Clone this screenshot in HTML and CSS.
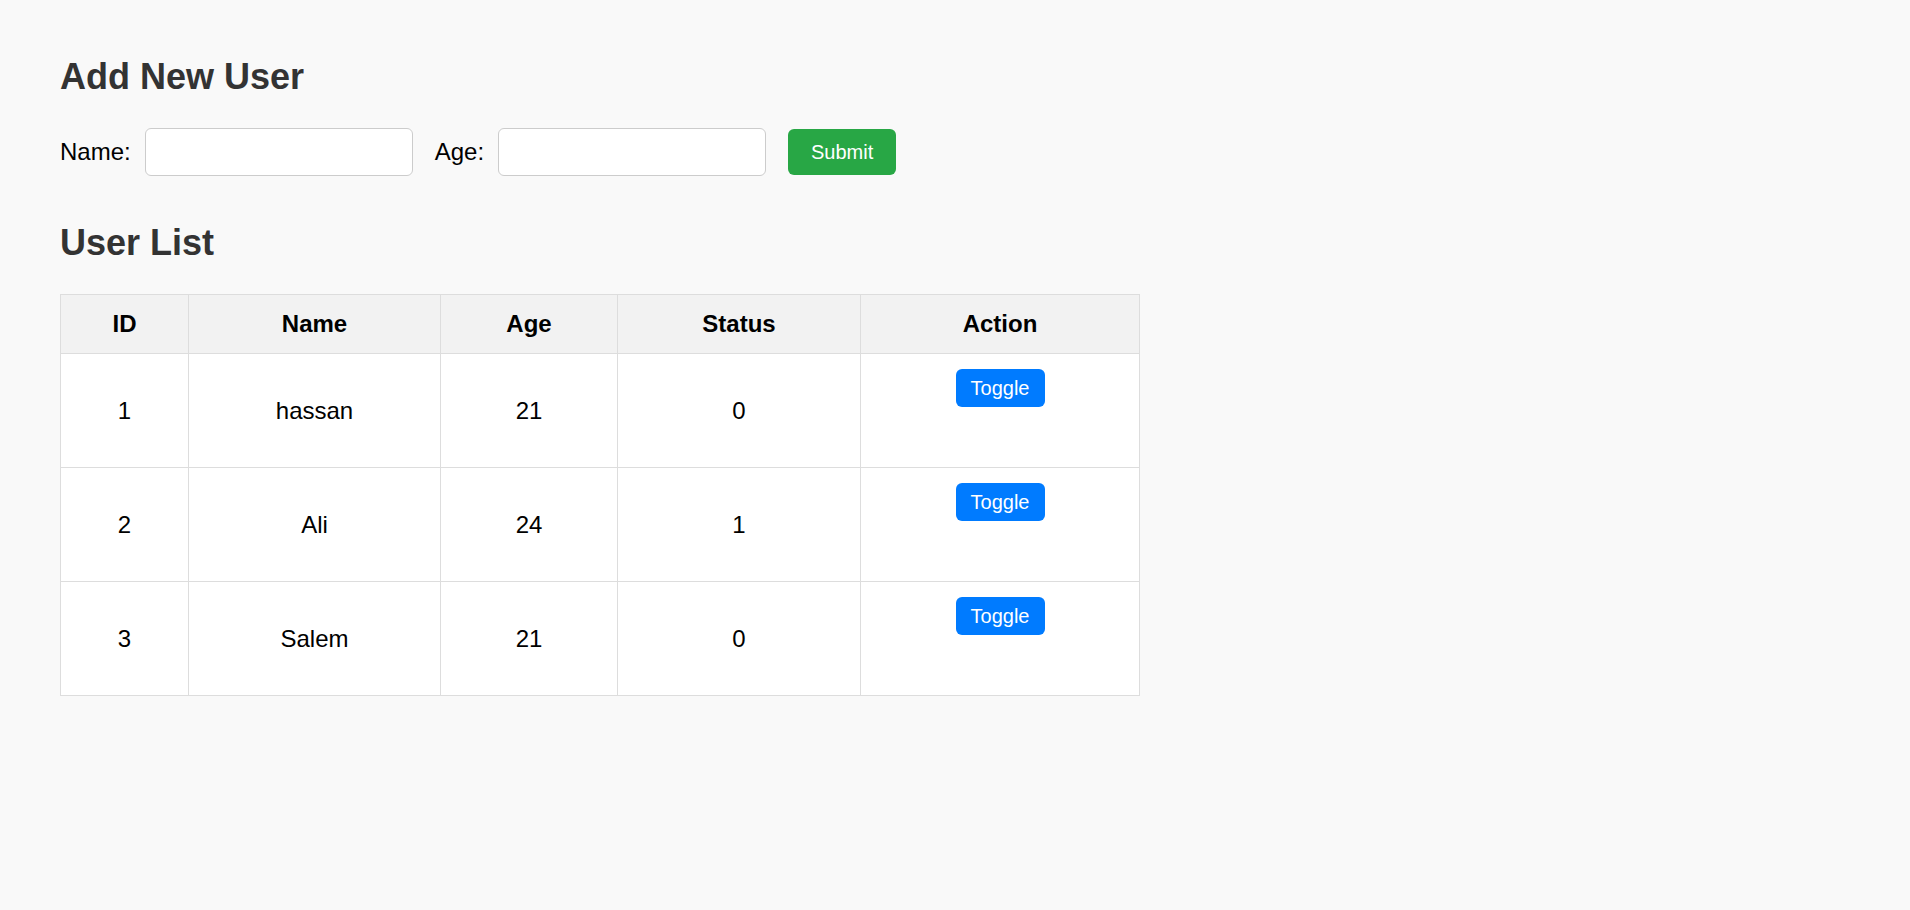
FILE: index.html
```html
<!DOCTYPE html>
<html lang="en">
<head>
<meta charset="utf-8">
<title>Users</title>
<link rel="stylesheet" href="styles.css">
</head>
<body>
  <h2 class="title">Add New User</h2>
  <form class="user-form">
    <label class="field-label" for="name">Name:</label>
    <input class="field-input" id="name" type="text">
    <label class="field-label" for="age">Age:</label>
    <input class="field-input" id="age" type="text">
    <button class="btn-submit" type="button">Submit</button>
  </form>

  <h2 class="title">User List</h2>
  <table class="user-table">
    <colgroup>
      <col class="c-id">
      <col class="c-name">
      <col class="c-age">
      <col class="c-status">
      <col class="c-action">
    </colgroup>
    <thead>
      <tr><th>ID</th><th>Name</th><th>Age</th><th>Status</th><th>Action</th></tr>
    </thead>
    <tbody>
      <tr>
        <td>1</td><td>hassan</td><td>21</td><td>0</td>
        <td class="action-cell"><div class="action-box"><button class="btn-toggle" type="button">Toggle</button></div></td>
      </tr>
      <tr>
        <td>2</td><td>Ali</td><td>24</td><td>1</td>
        <td class="action-cell"><div class="action-box"><button class="btn-toggle" type="button">Toggle</button></div></td>
      </tr>
      <tr>
        <td>3</td><td>Salem</td><td>21</td><td>0</td>
        <td class="action-cell"><div class="action-box"><button class="btn-toggle" type="button">Toggle</button></div></td>
      </tr>
    </tbody>
  </table>
</body>
</html>
```
FILE: styles.css
```css
html, body {
  margin: 0;
  background: #f9f9f9;
}
body {
  padding: 56px 60px;
  font-family: "Liberation Sans", Arial, sans-serif;
  font-size: 24px;
  color: #000;
}
.title {
  margin: 0 0 30px;
  font-size: 36px;
  line-height: 42px;
  font-weight: bold;
  color: #333;
}
.user-form {
  display: flex;
  align-items: center;
  height: 48px;
  margin: 0 0 46px;
}
.field-label {
  font-size: 24px;
  margin-right: 14px;
}
.field-input {
  box-sizing: border-box;
  width: 268px;
  height: 48px;
  margin: 0 22px 0 0;
  padding: 0 12px;
  border: 1px solid #ccc;
  border-radius: 6px;
  background: #fff;
  font: 24px "Liberation Sans", Arial, sans-serif;
}
.btn-submit {
  box-sizing: border-box;
  height: 46px;
  width: 108px;
  padding: 0;
  border: none;
  border-radius: 6px;
  background: #28a745;
  color: #fff;
  font: 20px "Liberation Sans", Arial, sans-serif;
}
.user-table {
  width: 1079px;
  table-layout: fixed;
  border-collapse: collapse;
  background: #fff;
}
.c-id { width: 128px; }
.c-name { width: 252px; }
.c-age { width: 177px; }
.c-status { width: 243px; }
.c-action { width: 279px; }
.user-table th,
.user-table td {
  border: 1px solid #ddd;
  padding: 15px;
  text-align: center;
  line-height: 28px;
  vertical-align: middle;
}
.user-table th {
  background: #f2f2f2;
  font-weight: bold;
}
.user-table td.action-cell {
  vertical-align: top;
}
.action-box {
  height: 83px;
}
.btn-toggle {
  box-sizing: border-box;
  height: 38px;
  width: 89px;
  padding: 0;
  border: none;
  border-radius: 6px;
  background: #007bff;
  color: #fff;
  font: 20px "Liberation Sans", Arial, sans-serif;
}
```
